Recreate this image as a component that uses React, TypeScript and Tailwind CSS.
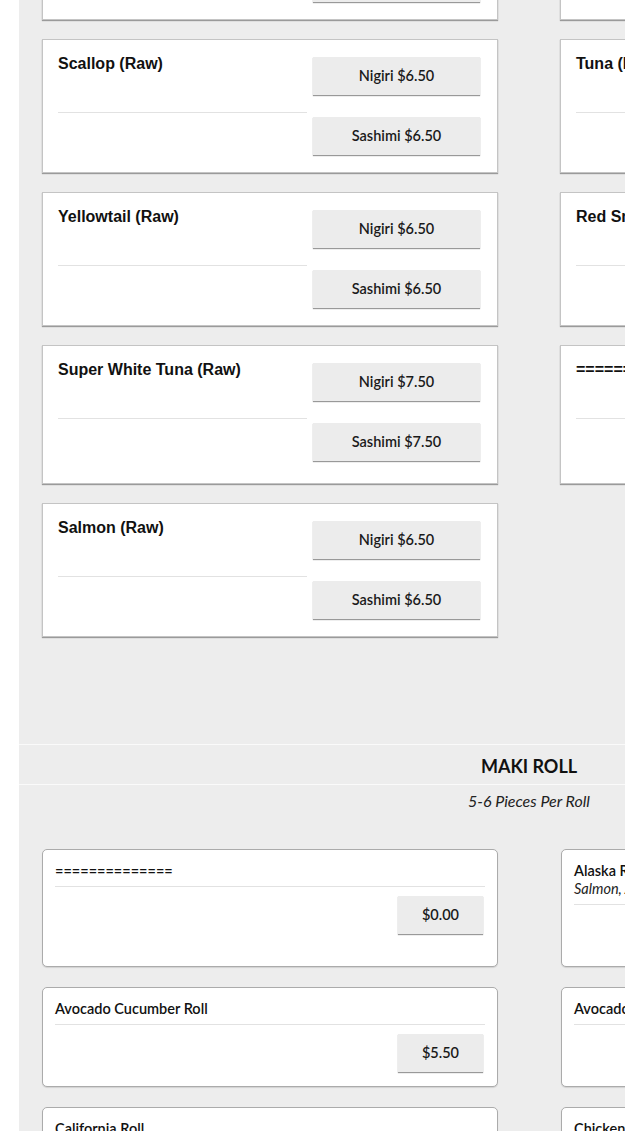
import React from "react";

type SushiItem = { name: string; nigiri: string; sashimi: string };

const leftTop: SushiItem[] = [
  { name: "Octopus (Tako)", nigiri: "Nigiri $6.50", sashimi: "Sashimi $6.50" },
  { name: "Scallop (Raw)", nigiri: "Nigiri $6.50", sashimi: "Sashimi $6.50" },
  { name: "Yellowtail (Raw)", nigiri: "Nigiri $6.50", sashimi: "Sashimi $6.50" },
  { name: "Super White Tuna (Raw)", nigiri: "Nigiri $7.50", sashimi: "Sashimi $7.50" },
  { name: "Salmon (Raw)", nigiri: "Nigiri $6.50", sashimi: "Sashimi $6.50" },
];

const rightTop: SushiItem[] = [
  { name: "Shrimp (Ebi)", nigiri: "Nigiri $6.50", sashimi: "Sashimi $6.50" },
  { name: "Tuna (Raw)", nigiri: "Nigiri $6.50", sashimi: "Sashimi $6.50" },
  { name: "Red Snapper (Raw)", nigiri: "Nigiri $6.50", sashimi: "Sashimi $6.50" },
  { name: "==============", nigiri: "Nigiri $0.00", sashimi: "Sashimi $0.00" },
];

const muli = "font-['Lato','Open_Sans',sans-serif]";

function SushiCard({ item, tall }: { item: SushiItem; tall?: boolean }) {
  return (
    <div
      className={`flex bg-white border border-[#c4c4c4] shadow-[0_1px_1px_rgba(0,0,0,0.35)] pl-[15px] pr-[17px] ${
        tall ? "min-h-[139px]" : ""
      }`}
    >
      <div className="w-[249px] pt-[15px]">
        <div className="h-[58px] border-b border-[#e2e2e2] text-[16px] leading-[18px] font-bold text-[#111] font-['Liberation_Sans',Arial,sans-serif]">
          {item.name}
        </div>
      </div>
      <div className={`ml-[6px] w-[167px] pt-[17px] pb-[17px] flex flex-col gap-[22px] ${muli}`}>
        <div className="h-[38px] bg-[#ececec] shadow-[0_1px_1px_rgba(0,0,0,0.4)] flex items-center justify-center text-[14.5px] leading-[18px] font-semibold text-[#1a1a1a]">
          {item.nigiri}
        </div>
        <div className="h-[38px] bg-[#ececec] shadow-[0_1px_1px_rgba(0,0,0,0.4)] flex items-center justify-center text-[14.5px] leading-[18px] font-semibold text-[#1a1a1a]">
          {item.sashimi}
        </div>
      </div>
    </div>
  );
}

type MakiItem = { name: string; desc?: string; price: string };

const makiLeft: MakiItem[] = [
  { name: "==============", price: "$0.00" },
  { name: "Avocado Cucumber Roll", price: "$5.50" },
  { name: "California Roll", price: "$6.00" },
];
const makiRight: MakiItem[] = [
  { name: "Alaska Roll", desc: "Salmon, Avocado, Cucumber", price: "$6.50" },
  { name: "Avocado Roll", price: "$5.00" },
  { name: "Chicken Tempura Roll", price: "$6.50" },
];

function MakiCard({ item }: { item: MakiItem }) {
  return (
    <div className={`bg-white border border-[#ababab] rounded-[5px] shadow-[0_1px_1px_rgba(0,0,0,0.12)] px-[12px] pt-[11px] pb-[14px] ${muli}`}>
      <div className="pb-[5px] border-b border-[#e2e2e2]">
        <div className="text-[14.5px] leading-[20px] font-semibold text-[#111]">{item.name}</div>
        {item.desc && (
          <div className="text-[14.5px] leading-[18px] italic text-[#222] -mt-[1px] pb-[1px]">{item.desc}</div>
        )}
      </div>
      <div className="mt-[9px] flex justify-end pr-[2px]">
        <div className="w-[85px] h-[38px] bg-[#ececec] shadow-[0_1px_1px_rgba(0,0,0,0.4)] flex items-center justify-center text-[14.5px] font-semibold text-[#1a1a1a]">
          {item.price}
        </div>
      </div>
    </div>
  );
}

export default function App() {
  const rows = leftTop.map((l, i) => [l, rightTop[i]] as const);
  const makiRows = makiLeft.map((l, i) => [l, makiRight[i]] as const);
  return (
    <div className="w-[625px] h-[1131px] overflow-hidden bg-white pl-[19px]">
      <div className="w-[1020px] bg-[#ededed] min-h-[1131px]">
        <div className="px-[23px] -mt-[114px] grid grid-cols-[456px_456px] gap-x-[62px] gap-y-[19px]">
          {rows.map(([l, r], i) => (
            <React.Fragment key={i}>
              <SushiCard item={l} />
              {r ? <SushiCard item={r} tall={i === 3} /> : <div />}
            </React.Fragment>
          ))}
        </div>
        <div className="h-[107px]" />
        <div className="h-[41px] border-t border-b border-[#fafafa] flex items-center justify-center pt-[3px]">
          <div className={`text-[18px] leading-[22px] font-bold text-[#111] ${muli}`}>MAKI ROLL</div>
        </div>
        <div className={`mt-[6px] text-center text-[16px] italic text-[#222] leading-[20px] ${muli}`}>
          5-6 Pieces Per Roll
        </div>
        <div className="h-[38px]" />
        <div className="px-[23px] grid grid-cols-[456px_456px] gap-x-[63px] gap-y-[20px]">
          {makiRows.map(([l, r], i) => (
            <React.Fragment key={i}>
              <MakiCard item={l} />
              <MakiCard item={r} />
            </React.Fragment>
          ))}
        </div>
      </div>
    </div>
  );
}
